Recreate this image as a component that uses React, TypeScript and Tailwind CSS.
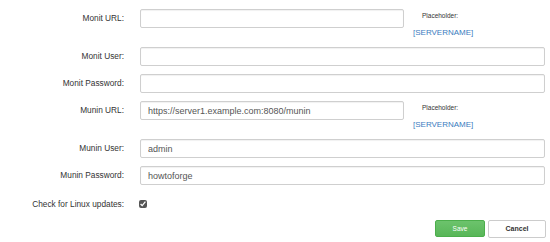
import React from "react";

const labelCls =
  "w-[124px] shrink-0 text-right text-[8.3px] text-[#333] leading-none";
const inputCls =
  "ml-[16px] h-[19px] rounded-[2px] border border-[#cfcfcf] bg-white px-[7px] text-[9px] text-[#555] outline-none shadow-[inset_0_1px_1px_rgba(0,0,0,0.06)]";

function Placeholder() {
  return (
    <div className="ml-[9px] flex h-[30px] flex-col">
      <span className="pl-[9px] pt-[4px] text-[6.5px] leading-none text-[#333]">
        Placeholder:
      </span>
      <span className="pt-[9px] text-[8px] leading-none text-[#3a7cc0]">
        [SERVERNAME]
      </span>
    </div>
  );
}

function Row({
  label,
  value,
  wide,
}: {
  label: string;
  value?: string;
  wide?: boolean;
}) {
  return (
    <div className="flex items-start">
      <div className="flex h-[19px] items-center">
        <span className={labelCls}>{label}</span>
      </div>
      <input
        readOnly
        value={value ?? ""}
        className={`${inputCls} ${wide ? "w-[405px]" : "w-[264px]"}`}
      />
      {!wide && <Placeholder />}
    </div>
  );
}

export default function App() {
  return (
    <div
      className="h-[242px] w-[550px] overflow-hidden bg-white pt-[9px]"
      style={{ fontFamily: '"Liberation Sans", Arial, sans-serif' }}
    >
      <div className="flex flex-col gap-[8px]">
        <Row label="Monit URL:" />
        <Row label="Monit User:" wide />
        <Row label="Monit Password:" wide />
        <Row label="Munin URL:" value="https://server1.example.com:8080/munin" />
        <Row label="Munin User:" value="admin" wide />
        <Row label="Munin Password:" value="howtoforge" wide />
        <div className="flex h-[20px] items-center pt-[2px]">
          <span className={labelCls}>Check for Linux updates:</span>
          <input
            type="checkbox"
            readOnly
            checked
            className="ml-[15px] h-[8px] w-[8px] accent-[#555]"
          />
        </div>
      </div>
      <div className="mt-[7px] flex justify-end gap-[3px] pr-[4px]">
        <button className="h-[17px] w-[50px] rounded-[2px] border border-[#4cae4c] bg-gradient-to-b from-[#6cc36c] to-[#58b658] text-[6.5px] text-white">
          Save
        </button>
        <button className="h-[18px] w-[58px] rounded-[2px] border border-[#ccc] bg-white text-[7px] font-bold text-[#333]">
          Cancel
        </button>
      </div>
    </div>
  );
}
